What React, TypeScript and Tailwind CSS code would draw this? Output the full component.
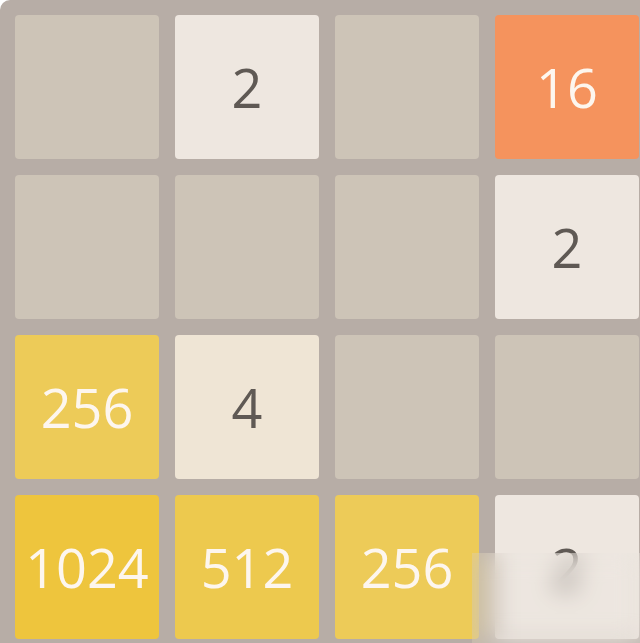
import React from "react";

type Cell = number | null;

const board: Cell[][] = [
  [null, 2, null, 16],
  [null, null, null, 2],
  [256, 4, null, null],
  [1024, 512, 256, 2],
];

const tileStyle: Record<number, string> = {
  2: "bg-[#eee7e0] text-[#5f5954]",
  4: "bg-[#efe5d5] text-[#5f5954]",
  16: "bg-[#f5935d] text-[#fdf6ee]",
  256: "bg-[#edcb58] text-[#fdf6ee]",
  512: "bg-[#edc94e] text-[#fdf6ee]",
  1024: "bg-[#eec53d] text-[#fdf6ee]",
};

const Tile: React.FC<{ value: Cell }> = ({ value }) => {
  if (value === null) {
    return <div className="h-[144px] w-[144px] rounded-[4px] bg-[#cdc4b7]" />;
  }
  return (
    <div
      className={`flex h-[144px] w-[144px] items-center justify-center rounded-[4px] text-[54px] leading-none ${tileStyle[value]}`}
    >
      {value}
    </div>
  );
};

export default function App() {
  return (
    <div className="relative h-[643px] w-[640px] overflow-hidden bg-white font-['Open_Sans',sans-serif]">
      <div className="grid w-[660px] grid-cols-[repeat(4,144px)] gap-[16px] rounded-tl-[10px] bg-[#b7ada6] p-[15px]">
        {board.flat().map((v, i) => (
          <Tile key={i} value={v} />
        ))}
      </div>
      {/* blurred stamp over the bottom corner */}
      <div className="absolute left-[472px] top-[553px] h-[90px] w-[168px] bg-[#ece7e2]/20 backdrop-blur-md" />
    </div>
  );
}
